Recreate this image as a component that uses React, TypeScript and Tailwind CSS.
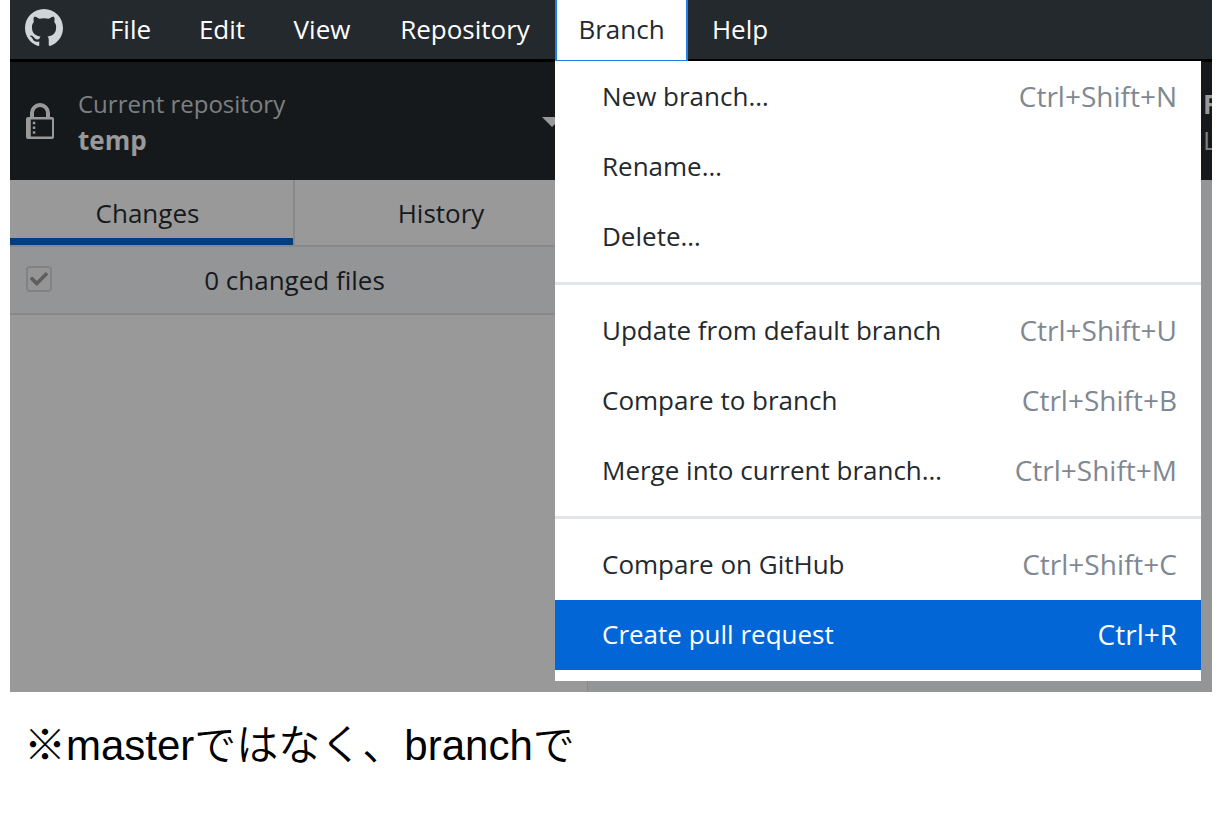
import { FaCheck } from "react-icons/fa";

type Entry = { label: string; keys?: string; active?: boolean };

const groups: Entry[][] = [
  [{ label: "New branch…", keys: "Ctrl+Shift+N" }, { label: "Rename…" }, { label: "Delete…" }],
  [
    { label: "Update from default branch", keys: "Ctrl+Shift+U" },
    { label: "Compare to branch", keys: "Ctrl+Shift+B" },
    { label: "Merge into current branch…", keys: "Ctrl+Shift+M" },
  ],
  [
    { label: "Compare on GitHub", keys: "Ctrl+Shift+C" },
    { label: "Create pull request", keys: "Ctrl+R", active: true },
  ],
];

function GitHubMark() {
  return (
    <svg viewBox="0 0 16 16" className="h-[38px] w-[38px] fill-[#d1d5da]" aria-hidden="true">
      <path d="M8 0C3.58 0 0 3.58 0 8c0 3.54 2.29 6.53 5.47 7.59.4.07.55-.17.55-.38 0-.19-.01-.82-.01-1.49-2.01.37-2.53-.49-2.69-.94-.09-.23-.48-.94-.82-1.13-.28-.15-.68-.52-.01-.53.63-.01 1.08.58 1.23.82.72 1.21 1.87.87 2.33.66.07-.52.28-.87.51-1.07-1.78-.2-3.64-.89-3.64-3.95 0-.87.31-1.59.82-2.15-.08-.2-.36-1.02.08-2.12 0 0 .67-.21 2.2.82.64-.18 1.32-.27 2-.27s1.36.09 2 .27c1.53-1.04 2.2-.82 2.2-.82.44 1.1.16 1.92.08 2.12.51.56.82 1.27.82 2.15 0 3.07-1.87 3.75-3.65 3.95.29.25.54.73.54 1.48 0 1.07-.01 1.93-.01 2.2 0 .21.15.46.55.38A8.01 8.01 0 0 0 16 8c0-4.42-3.58-8-8-8z" />
    </svg>
  );
}

function LockIcon() {
  return (
    <svg viewBox="0 0 28 36" className="h-9 w-7 shrink-0" fill="#999999" aria-hidden="true">
      <path
        fillRule="evenodd"
        d="M4 14V10a10 10 0 0 1 20 0v4h2a2 2 0 0 1 2 2v18a2 2 0 0 1-2 2H2a2 2 0 0 1-2-2V16a2 2 0 0 1 2-2zM8 14h12V10a6 6 0 0 0-12 0zM4.800 16.600v16.800h21.200v-16.800z"
      />
      <path d="M6.800 18.800h2.500v2.500H6.800zM6.800 23.500h2.500v2.500H6.800zM6.800 28.200h2.500v2.500H6.800z" />
    </svg>
  );
}

const menuButton = "flex h-full items-center justify-center pb-[2px] text-white";

export default function App() {
  return (
    <main className="min-h-screen bg-white pr-4 pl-[10px] font-['Open_Sans','Noto_Sans_CJK_JP',sans-serif] text-[26px] leading-9">
      <div className="flex h-[692px] flex-col bg-[#999999]">
        <nav className="flex h-[62px] shrink-0 items-stretch border-b-[3px] border-black bg-[#24292e]" aria-label="Application menu">
          <div className="flex w-[76px] items-center pb-1 pl-[15px]">
            <GitHubMark />
          </div>
          <button className={`${menuButton} w-[89px]`}>File</button>
          <button className={`${menuButton} w-[94px]`}>Edit</button>
          <button className={`${menuButton} w-[106px]`}>View</button>
          <button className={`${menuButton} w-[180px]`}>Repository</button>
          <div className="relative h-[61px] w-[133px]">
            <button aria-expanded="true" className="flex h-full w-full items-center justify-center border-x-2 border-b border-[#2080ec] bg-white pb-[2px] text-[#24292e]">
              Branch
            </button>
            <div role="menu" className="absolute top-full left-0 z-10 flex w-[646px] flex-col bg-white pt-px pb-[11px] text-[#24292e]">
              {groups.map((group, i) => (
                <div key={i} role="group">
                  {i > 0 && <div role="separator" className="mt-[10px] mb-[11px] h-[3px] bg-[#e1e4e8]" />}
                  {group.map((item) => (
                    <button
                      key={item.label}
                      role="menuitem"
                      className={`flex h-[70px] w-full items-center justify-between pr-6 pb-[2px] pl-[47px] ${item.active ? "bg-[#0366d6] text-white" : ""}`}
                    >
                      <span>{item.label}</span>
                      {item.keys && <span className={`text-[28px] ${item.active ? "" : "text-[#808891]"}`}>{item.keys}</span>}
                    </button>
                  ))}
                </div>
              ))}
            </div>
          </div>
          <button className={`${menuButton} w-[104px]`}>Help</button>
        </nav>

        <header className="flex h-[118px] shrink-0 items-stretch justify-between bg-[#16191c]">
          <button className="flex w-[578px] items-center pl-4 text-left">
            <LockIcon />
            <span className="ml-6 flex grow flex-col pt-[2px]">
              <span className="text-2xl/9 text-[#7d8083]">Current repository</span>
              <strong className="text-[#999999]">temp</strong>
            </span>
            <svg viewBox="0 0 20 10" className="mt-[2px] mr-[26px] h-[10px] w-5" aria-hidden="true">
              <path d="M0 0h20L10 10z" fill="#999999" />
            </svg>
          </button>
          <button className="flex w-[9px] flex-col justify-center overflow-hidden pt-[2px] text-left">
            <strong className="text-[#999999]">F</strong>
            <span className="text-[#7d8083]">L</span>
          </button>
        </header>

        <div className="flex grow">
          <aside className="flex w-[578px] flex-col border-r border-[#87898b] text-[#16191c]">
            <div className="flex h-[67px] border-b-2 border-[#87898b]">
              <button className="flex w-[283px] items-center justify-center border-b-[7px] border-[#023d80] pt-2 pr-2">Changes</button>
              <button className="grow border-l-2 border-[#87898b]">History</button>
            </div>
            <label className="flex h-[68px] items-center border-b-2 border-[#87898b] bg-[#949596] pl-4">
              <input type="checkbox" defaultChecked className="peer sr-only" />
              <span className="mb-[2px] flex size-[26px] items-center justify-center rounded-[4px] border-2 border-[#838383] bg-[#959595]">
                <FaCheck className="size-[18px] text-[#5c5e60]" />
              </span>
              <span className="grow pr-[50px] text-center">0 changed files</span>
            </label>
          </aside>
          <section className="grow bg-[#949596]" aria-label="Changed file contents" />
        </div>
      </div>
      <p className="px-[14px] pt-6 pb-8 font-['Liberation_Sans','Noto_Sans_CJK_JP',sans-serif] text-[42px] leading-[60px] font-[350] text-black">
        ※masterではなく、branchで
      </p>
    </main>
  );
}
